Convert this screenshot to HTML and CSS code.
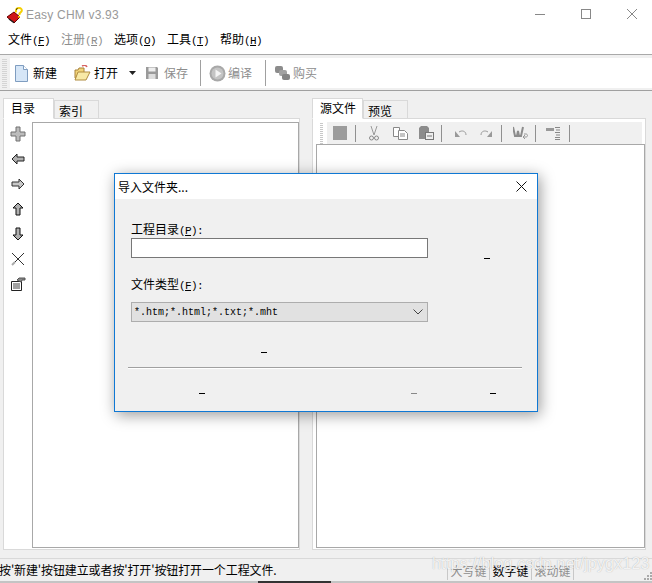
FILE: index.html
```html
<!DOCTYPE html>
<html lang="zh">
<head>
<meta charset="utf-8">
<title>Easy CHM v3.93</title>
<link rel="stylesheet" href="styles.css">
</head>
<body>
<div class="app">
  <header class="titlebar">
    <svg class="app-icon" width="17" height="17" viewBox="0 0 17 17"><path d="M1 10 8 5l6 5-6 6z" fill="#d01818" stroke="#600" stroke-width="1"/><path d="M3 12l5 3.500" stroke="#222" stroke-width="1.500"/><path d="M10 5.500C9.500 2 11 1 13 1s3.500 1.500 2.500 3.500l-2 2v1.500" fill="none" stroke="#f5d000" stroke-width="2"/><path d="M10 2.500 11.500 1.500" stroke="#111"/><rect x="12" y="9" width="2" height="1.500" fill="#f5d000"/></svg>
    <span class="app-name">Easy CHM v3.93</span>
    <div class="win-controls">
      <svg width="12" height="12" viewBox="0 0 12 12"><path d="M1 6.500h10" stroke="#888"/></svg>
      <svg width="12" height="12" viewBox="0 0 12 12"><rect x="1.500" y="1.500" width="9" height="9" fill="none" stroke="#888"/></svg>
      <svg width="12" height="12" viewBox="0 0 12 12"><path d="M1 1l10 10M11 1 1 11" stroke="#888"/></svg>
    </div>
  </header>

  <nav class="menubar">
    <span class="menu-item">文件<span class="mono">(<u>F</u>)</span></span>
    <span class="menu-item off">注册<span class="mono">(<u>R</u>)</span></span>
    <span class="menu-item">选项<span class="mono">(<u>O</u>)</span></span>
    <span class="menu-item">工具<span class="mono">(<u>T</u>)</span></span>
    <span class="menu-item">帮助<span class="mono">(<u>H</u>)</span></span>
  </nav>

  <div class="toolbar-band">
    <div class="gripper"></div>
    <div class="toolbar">
      <span class="tool t-new">
        <svg width="15" height="17" viewBox="0 0 15 17"><path d="M1.500.5h8l4 4v12h-12z" fill="#d6e6f7" stroke="#7f9dc0"/><path d="M9.500.5v4h4" fill="#fff" stroke="#7f9dc0"/></svg>
        新建
      </span>
      <span class="tool t-open">
        <svg width="17" height="17" viewBox="0 0 17 17"><path d="M1 5h3l1-2h5v10H1z" fill="#f2d478" stroke="#a8823a"/><path d="M8 1c2-1 4-1 5 1" fill="none" stroke="#d86060" stroke-width="1.500"/><path d="M1 15l3-8h12l-4 8z" fill="#f8e9a6" stroke="#b08c40"/></svg>
        打开
      </span>
      <svg class="caret" width="7" height="4" viewBox="0 0 7 4"><path d="M0 0h7L3.500 4z" fill="#222"/></svg>
      <span class="tool t-save off">
        <svg width="14" height="14" viewBox="0 0 14 14"><path d="M1 1h11l1 1v11H1z" fill="#9a9a9a"/><rect x="3.500" y="1.500" width="7" height="4" fill="#eee"/><rect x="3.500" y="8" width="7" height="5" fill="#ddd"/></svg>
        保存
      </span>
      <i class="tool-sep sep-a"></i>
      <span class="tool t-build off">
        <svg width="17" height="17" viewBox="0 0 17 17"><circle cx="8.500" cy="8.500" r="8" fill="#a8a8a8"/><circle cx="8.500" cy="8.500" r="6" fill="#c4c4c4"/><path d="M6.500 4.500v8l6-4z" fill="#f4f4f4"/></svg>
        编译
      </span>
      <i class="tool-sep sep-b"></i>
      <span class="tool t-buy off">
        <svg width="17" height="16" viewBox="0 0 17 16"><rect x="1" y="1" width="8" height="7" rx="2" fill="#8c8c8c"/><rect x="5" y="5" width="8" height="6" rx="2" fill="#a2a2a2"/><rect x="8" y="9" width="8" height="6" rx="2" fill="#858585"/></svg>
        购买
      </span>
    </div>
  </div>

  <main class="workspace">
    <section class="pane pane-left">
      <div class="tabs">
        <span class="tab active">目录</span>
        <span class="tab">索引</span>
      </div>
      <div class="tab-body left-body">
        <div class="side-tools">
          <svg width="16" height="16" viewBox="0 0 16 16"><path d="M6 1h4v5h5v4h-5v5H6v-5H1V6h5z" fill="#bcbcbc" stroke="#707070"/></svg>
          <svg width="14" height="14" viewBox="0 0 14 14"><path d="M1 7l5-5v3h7v4H6v3z" fill="#b0b0b0" stroke="#222"/></svg>
          <svg width="14" height="14" viewBox="0 0 14 14"><path d="M13 7 8 2v3H1v4h7v3z" fill="#c8c8c8" stroke="#333"/></svg>
          <svg width="14" height="14" viewBox="0 0 14 14"><path d="M7 1l5 5H9v7H5V6H2z" fill="#b0b0b0" stroke="#111"/></svg>
          <svg width="14" height="14" viewBox="0 0 14 14"><path d="M7 13l5-5H9V1H5v7H2z" fill="#b0b0b0" stroke="#111"/></svg>
          <svg width="14" height="14" viewBox="0 0 14 14"><path d="M1 1l12 12M13 1 1 13" stroke="#333" stroke-width="1"/><path d="M1 13l3-3" stroke="#aaa" stroke-width="2"/></svg>
          <svg width="16" height="14" viewBox="0 0 16 14"><path d="M1.500 4.500h10v9h-10z" fill="#fff" stroke="#222"/><path d="M3 7h7M3 9h7M3 11h7" stroke="#444"/><path d="M7 3l2-2h6v2h-3l-1 2z" fill="#888" stroke="#555"/></svg>
        </div>
        <div class="list-box"></div>
      </div>
    </section>

    <section class="pane pane-right">
      <div class="tabs">
        <span class="tab active centered">源文件</span>
        <span class="tab">预览</span>
      </div>
      <div class="tab-body right-body">
        <div class="edit-band">
          <div class="edit-grip"></div>
          <div class="edit-tools">
            <svg class="e-stop" width="14" height="14" viewBox="0 0 14 14"><rect width="14" height="14" fill="#9c9c9c"/></svg>
            <i class="e-sep"></i>
            <svg class="e-cut" width="10" height="15" viewBox="0 0 10 15"><path d="M2 0l3 9M8 0 5 9" stroke="#999"/><circle cx="2.500" cy="12" r="2" fill="none" stroke="#888"/><circle cx="7.500" cy="12" r="2" fill="none" stroke="#888"/></svg>
            <svg class="e-copy" width="15" height="13" viewBox="0 0 15 13"><path d="M.5.5h6v9h-6z" fill="#fff" stroke="#888"/><path d="M5.500 3.500h6l3 3v6h-9z" fill="#fff" stroke="#888"/><path d="M7 7h5M7 9h5" stroke="#888"/></svg>
            <svg class="e-paste" width="16" height="14" viewBox="0 0 16 14"><path d="M1 2l2-2h6l2 2v11H1z" fill="#8c8c8c"/><rect x="7.500" y="6.500" width="8" height="7" fill="#eee" stroke="#777"/><path d="M9 10h5" stroke="#777"/></svg>
            <i class="e-sep"></i>
            <svg class="e-undo" width="12" height="9" viewBox="0 0 12 9"><path d="M4 3c3-2 7-1 7 3" fill="none" stroke="#999"/><path d="M0 2v6h5z" fill="#999"/></svg>
            <svg class="e-redo" width="12" height="9" viewBox="0 0 12 9"><path d="M8 3C5 1 1 2 1 6" fill="none" stroke="#999"/><path d="M12 2v6H7z" fill="#999"/></svg>
            <i class="e-sep"></i>
            <svg class="e-wrap" width="15" height="15" viewBox="0 0 15 15"><path d="M0 1l2 9h2l1-5 1 5h2l2-9" fill="none" stroke="#8c8c8c" stroke-width="2"/><path d="M11 8h2c2 0 2 3 0 3h-2m1-2-2 2 2 2" fill="none" stroke="#999"/></svg>
            <i class="e-sep"></i>
            <svg class="e-ruler" width="14" height="13" viewBox="0 0 14 13"><rect y="1" width="8" height="3" fill="#999"/><path d="M9 .5h5M10 3h4M9 5.500h5M10 8h4M9 10.500h5M9 12.500h5" stroke="#888"/></svg>
            <i class="e-sep"></i>
          </div>
        </div>
        <div class="editor"></div>
      </div>
    </section>
  </main>

  <footer class="statusbar">
    <span class="status-msg">按'新建'按钮建立或者按'打开'按钮打开一个工程文件.</span>
    <span class="status-cell off">大写键</span>
    <span class="status-cell">数字键</span>
    <span class="status-cell off last">滚动键</span>
    <svg class="grip" width="9" height="9" viewBox="0 0 9 9"><path d="M7 1h2v2H7zM4 4h2v2H4zM7 4h2v2H7zM1 7h2v2H1zM4 7h2v2H4zM7 7h2v2H7z" fill="#aaa"/></svg>
  </footer>
  <div class="bottom-strip"></div>

  <div class="dialog">
    <div class="dlg-title">
      <span>导入文件夹...</span>
      <svg width="11" height="11" viewBox="0 0 11 11"><path d="M.5.500l10 10M10.500.500l-10 10" stroke="#111"/></svg>
    </div>
    <div class="dlg-body">
      <label class="dlg-label">工程目录<span class="mono">(<u>P</u>):</span></label>
      <div class="dlg-row">
        <div class="dlg-input"></div>
        <i class="key dash-side"></i>
      </div>
      <label class="dlg-label label-2">文件类型<span class="mono">(<u>F</u>):</span></label>
      <div class="dlg-select">
        <span class="select-text">*.htm;*.html;*.txt;*.mht</span>
        <svg width="10" height="6" viewBox="0 0 10 6"><path d="M.5.500 5 5 9.500.500" fill="none" stroke="#444"/></svg>
      </div>
      <i class="key dash-mid"></i>
      <hr class="dlg-rule">
      <div class="dlg-buttons">
        <i class="key dash-b1"></i>
        <i class="key dis dash-b2"></i>
        <i class="key dash-b3"></i>
      </div>
    </div>
  </div>

  <div class="watermark">https://blog.csdn.net/jpygx123</div>
</div>
</body>
</html>
```
FILE: styles.css
```css
* { box-sizing: border-box; }
html, body { margin: 0; padding: 0; }
body { width: 652px; height: 583px; overflow: hidden; background: #f0f0f0; }
.app {
  position: relative; width: 652px; height: 583px; overflow: hidden;
  display: flex; flex-direction: column;
  background: #f0f0f0; color: #000;
  font: 12px/16px "Noto Sans CJK SC", "Liberation Sans", sans-serif;
}
.mono { font-family: "Liberation Mono", monospace; font-size: 11px; letter-spacing: -.6px; }
.off { color: #8d8d8d; }

.titlebar { height: 30px; background: #fff; display: flex; align-items: center; padding-left: 6px; flex: none; }
.app-icon { margin-right: 3px; }
.app-name { font: 12px "Liberation Sans", sans-serif; color: #999; letter-spacing: .2px; }
.win-controls { margin-left: auto; display: flex; gap: 34px; padding-right: 14px; margin-top: -3px; }

.menubar { height: 25px; background: #fff; display: flex; gap: 12px; padding: 0 0 4px 8px; border-bottom: 1px solid #a9a9a9; align-items: center; flex: none; }
.menu-item { white-space: nowrap; width: 41px; }

.toolbar-band { height: 36px; display: flex; padding: 3px 0 2px; border-bottom: 1px solid #a0a0a0; flex: none; }
.gripper { width: 10px; margin: 0 2px 0 0; background: repeating-linear-gradient(#f0f0f0 0 1px, #d4d4d4 1px 2px) 2px 0 / 5px 100% no-repeat; }
.toolbar { flex: 1; background: #fff; display: flex; align-items: center; padding-left: 4px; margin-left: -2px; }
.tool { display: inline-flex; align-items: center; gap: 4px; white-space: nowrap; }
.t-open { margin-left: 17px; gap: 3px; }
.caret { margin-left: 11px; }
.t-save { margin-left: 9px; gap: 5px; }
.tool-sep { width: 1px; height: 26px; background: #a0a0a0; }
.sep-a { margin-left: 12px; }
.t-build { margin-left: 8px; gap: 2px; }
.sep-b { margin-left: 13px; }
.t-buy { margin-left: 8px; gap: 2px; }

.workspace { flex: 1; display: flex; padding: 7px 6px 8px 3px; min-height: 0; }
.pane { display: flex; flex-direction: column; }
.pane-left { width: 297px; }
.pane-right { width: 334px; margin-left: 12px; }
.tabs { height: 20px; display: flex; align-items: flex-end; position: relative; z-index: 1; }
.tab { width: 45px; height: 18px; padding-left: 4px; background: #f0f0f0; border: 1px solid #d9d9d9; border-bottom: 0; line-height: 20px; }
.tab.active { width: 51px; height: 21px; padding-left: 7px; background: #fff; border-bottom: 1px solid #fff; margin-bottom: -1px; line-height: 18px; }
.tab.active.centered { padding-left: 7px; }
.tab-body { flex: 1; background: #fff; border: 1px solid #d9d9d9; min-height: 0; }

.left-body { display: flex; padding: 3px 0 1px 0; }
.side-tools { width: 28px; display: flex; flex-direction: column; align-items: center; gap: 11px; padding-top: 4px; }
.side-tools svg:first-child { margin-bottom: -1px; }
.list-box { flex: 1; background: #fff; border: 1px solid #a8a8a8; }

.right-body { display: flex; flex-direction: column; padding: 3px 0 1px 3px; }
.edit-band { height: 22px; display: flex; flex: none; }
.edit-grip { width: 10px; margin-left: 1px; background: repeating-linear-gradient(#fff 0 1px, #c8c8c8 1px 2px) 3px 0 / 3px 100% no-repeat; }
.edit-tools { flex: 1; display: flex; align-items: center; padding-left: 6px; margin-right: 3px; background: #f0f0f0; }
.e-sep { width: 1px; height: 17px; background: #909090; }
.e-stop + .e-sep { margin-left: 8px; }
.e-cut { margin-left: 13px; }
.e-copy { margin-left: 14px; }
.e-paste { margin-left: 10px; }
.e-paste + .e-sep { margin-left: 7px; }
.e-undo { margin-left: 13px; }
.e-redo { margin-left: 13px; }
.e-redo + .e-sep { margin-left: 9px; }
.e-wrap { margin-left: 11px; }
.e-wrap + .e-sep { margin-left: 7px; }
.e-ruler { margin-left: 10px; }
.e-ruler + .e-sep { margin-left: 9px; }
.editor { flex: 1; background: #fff; border: 1px solid #a8a8a8; }

.statusbar { height: 23px; display: flex; align-items: center; border-top: 1px solid #d9d9d9; white-space: nowrap; flex: none; }
.status-msg { width: 448px; margin-left: -1px; flex: none; overflow: hidden; letter-spacing: -.12px; }
.status-cell { width: 42px; height: 20px; text-align: center; border-left: 1px solid #c8c8c8; line-height: 22px; }
.status-cell.last { border-right: 1px solid #c8c8c8; width: 43px; }
.grip { margin-left: auto; align-self: flex-end; margin-bottom: 1px; }
.bottom-strip { height: 2px; flex: none; background: linear-gradient(90deg, #c4c4c4 0 258px, #333 258px 331px, #c4c4c4 331px); }

.dialog {
  position: absolute; left: 114px; top: 173px; width: 424px; height: 239px;
  display: flex; flex-direction: column;
  background: #f0f0f0; border: 1px solid #0f78d4;
  box-shadow: 2px 3px 14px rgba(0,0,0,.4);
}
.dlg-title { height: 25px; background: #fff; display: flex; align-items: center; justify-content: space-between; padding: 0 10px 0 3px; flex: none; }
.dlg-body { flex: 1; padding: 21px 15px 0 16px; display: flex; flex-direction: column; align-items: flex-start; }
.dlg-label { height: 18px; line-height: 18px; white-space: nowrap; }
.dlg-row { display: flex; align-items: flex-end; }
.dlg-input { width: 297px; height: 20px; background: #fff; border: 1px solid #777; }
.key { display: block; width: 6px; height: 1px; background: #000; flex: none; }
.key.dis { background: #888; }
.dash-side { margin-left: 56px; margin-bottom: -1px; }
.label-2 { margin-top: 17px; margin-bottom: 9px; }
.dlg-select { width: 297px; height: 20px; background: #e1e1e1; border: 1px solid #adadad; display: flex; align-items: center; justify-content: space-between; padding: 0 4px 0 2px; }
.select-text { font: 10px "Liberation Mono", monospace; }
.dash-mid { margin: 30px 0 0 130px; }
.dlg-rule { width: 394px; margin: 14px 0 0 -3px; height: 2px; border: 0; border-top: 1px solid #a0a0a0; border-bottom: 1px solid #fff; }
.dlg-buttons { display: flex; margin-top: 24px; }
.dash-b1 { margin-left: 68px; }
.dash-b2 { margin-left: 206px; }
.dash-b3 { margin-left: 73px; }

.watermark {
  position: absolute; left: 432px; top: 553px;
  font: 16px/22px "Liberation Sans", sans-serif; letter-spacing: .2px;
  color: rgba(255,255,255,.85); text-shadow: 0 0 1px rgba(120,120,120,.6);
  white-space: nowrap;
}
```
